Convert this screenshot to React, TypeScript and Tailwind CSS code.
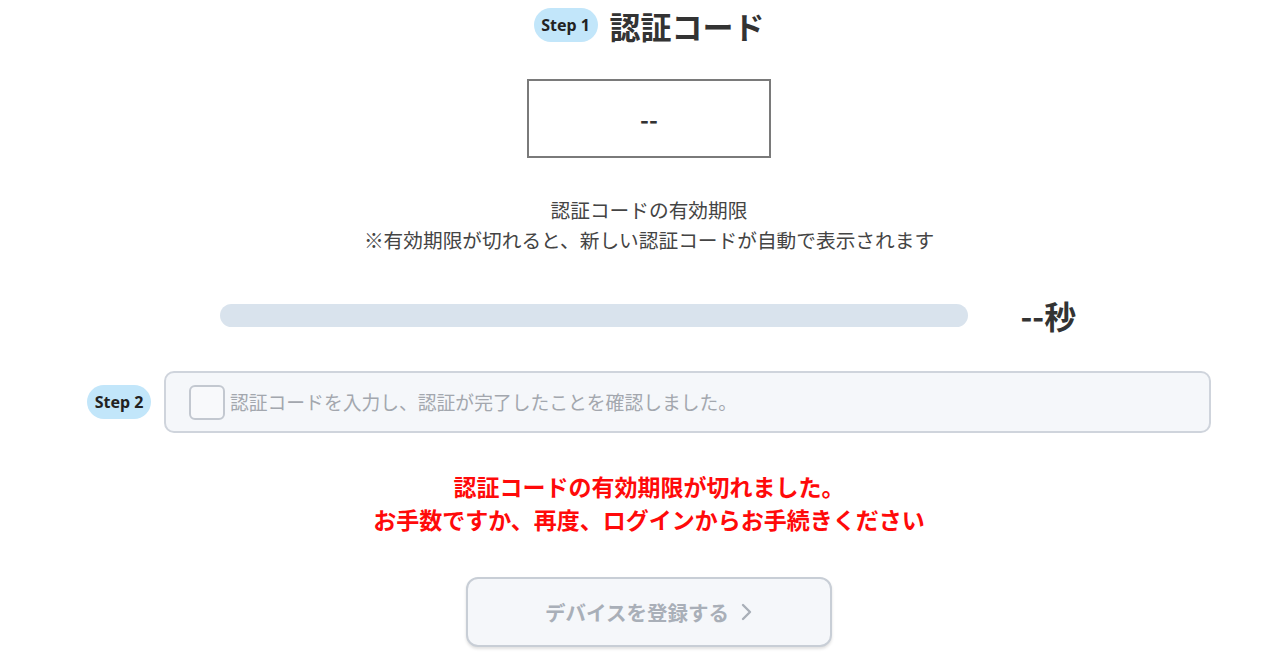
const jp = { fontFamily: '"Noto Sans CJK JP", "Noto Sans", sans-serif' };

const StepBadge = ({ label }: { label: string }) => (
  <div
    className="flex h-[34px] w-[64px] shrink-0 items-center justify-center rounded-full bg-[#c2e6fa] text-[16px] font-bold text-[#222]"
    style={{ fontFamily: '"Noto Sans", sans-serif' }}
  >
    {label}
  </div>
);

const App = () => {
  return (
    <div className="min-h-[671px] w-full bg-white pl-[18px]" style={jp}>
      <div className="flex flex-col items-center pt-2">
        {/* Step 1 */}
        <div className="flex h-[34px] items-center gap-[12px]">
          <StepBadge label="Step 1" />
          <h1 className="text-[31px] font-bold leading-none text-[#333]">認証コード</h1>
        </div>

        <div className="mt-[37px] flex h-[79px] w-[244px] items-center justify-center border-2 border-[#7a7a7a]">
          <span className="text-[24px] font-bold text-[#333]">--</span>
        </div>

        <div className="mt-[37px] text-center text-[19.7px] leading-[30px] text-[#444]">
          <p>認証コードの有効期限</p>
          <p>※有効期限が切れると、新しい認証コードが自動で表示されます</p>
        </div>

        <div className="mt-[40px] flex h-[40px] items-center gap-[53px]">
          <div className="h-[23px] w-[748px] rounded-full bg-[#d9e3ed]" />
          <span className="w-[58px] whitespace-nowrap text-[32px] font-bold leading-[40px] text-[#333]">--秒</span>
        </div>

        {/* Step 2 */}
        <div className="mt-[36px] flex items-center gap-[13px]">
          <StepBadge label="Step 2" />
          <label className="flex h-[62px] w-[1047px] items-center gap-[5px] rounded-[10px] border-2 border-[#cfd4dc] bg-[#f5f7fa] pl-[23px]">
            <span className="h-[35px] w-[36px] rounded-[6px] border-2 border-[#c3c8d0] bg-[#f8f9fb]" />
            <span className="text-[18.8px] text-[#a3a7ae]">
              認証コードを入力し、認証が完了したことを確認しました。
            </span>
          </label>
        </div>

        <div className="mt-[37px] text-center text-[23px] font-bold leading-[33px] text-[#ff0a0a]">
          <p>認証コードの有効期限が切れました。</p>
          <p>お手数ですか、再度、ログインからお手続きください</p>
        </div>

        <button className="mt-[41px] flex h-[70px] w-[366px] items-center justify-center gap-[12px] rounded-[12px] border-2 border-[#c8ced6] bg-[#f5f7fa] shadow-[0_2px_3px_rgba(0,0,0,0.12)]">
          <span className="text-[20.5px] font-bold text-[#a9afb8]">デバイスを登録する</span>
          <svg width="12" height="20" viewBox="0 0 12 20" fill="none">
            <path d="M2 3l7 7-7 7" stroke="#a9afb8" strokeWidth="2.4" strokeLinecap="round" strokeLinejoin="round" />
          </svg>
        </button>
      </div>
    </div>
  );
};

export default App;
